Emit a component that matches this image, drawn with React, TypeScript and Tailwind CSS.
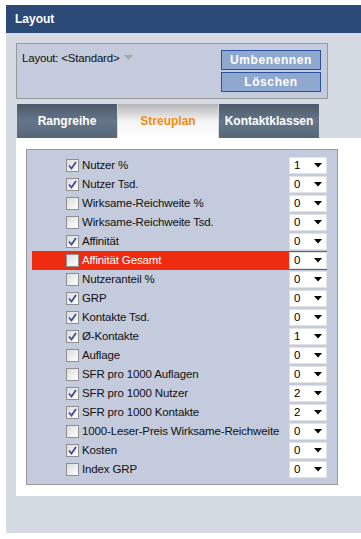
const rows: { label: string; checked: boolean; value: string; active?: boolean }[] = [
  { label: 'Nutzer %', checked: true, value: '1' },
  { label: 'Nutzer Tsd.', checked: true, value: '0' },
  { label: 'Wirksame-Reichweite %', checked: false, value: '0' },
  { label: 'Wirksame-Reichweite Tsd.', checked: false, value: '0' },
  { label: 'Affinität', checked: true, value: '0' },
  { label: 'Affinität Gesamt', checked: false, value: '0', active: true },
  { label: 'Nutzeranteil %', checked: false, value: '0' },
  { label: 'GRP', checked: true, value: '0' },
  { label: 'Kontakte Tsd.', checked: true, value: '0' },
  { label: 'Ø-Kontakte', checked: true, value: '1' },
  { label: 'Auflage', checked: false, value: '0' },
  { label: 'SFR pro 1000 Auflagen', checked: false, value: '0' },
  { label: 'SFR pro 1000 Nutzer', checked: true, value: '2' },
  { label: 'SFR pro 1000 Kontakte', checked: true, value: '2' },
  { label: '1000-Leser-Preis Wirksame-Reichweite', checked: false, value: '0' },
  { label: 'Kosten', checked: true, value: '0' },
  { label: 'Index GRP', checked: false, value: '0' },
]

const Checkbox = ({ checked }: { checked: boolean }) => (
  <span className="w-[13px] h-[13px] shrink-0 border border-[#8f8f8f] bg-gradient-to-br from-[#dcdcdc] to-white flex items-center justify-center">
    {checked && (
      <svg width="9" height="9" viewBox="0 0 9 9">
        <path d="M1 4.5 L3.5 7.5 L8 1" fill="none" stroke="#3d4f9a" strokeWidth="1.8" />
      </svg>
    )}
  </span>
)

const Select = ({ value }: { value: string }) => (
  <div className="w-[38px] h-[17px] shrink-0 bg-white border border-[#e2e2e2] flex items-center justify-between pl-[4px] pr-[4px] text-black">
    <span>{value}</span>
    <svg width="8" height="5" viewBox="0 0 8 5">
      <path d="M0 0 H8 L4 4.5 Z" fill="#000" />
    </svg>
  </div>
)

const Tab = ({ label, active }: { label: string; active?: boolean }) => (
  <div
    className={`w-[100px] h-[34px] flex items-center justify-center font-bold ${
      active
        ? 'bg-gradient-to-b from-[#b4b4b4] via-[#f4f4f4] to-white text-[#f28a0e]'
        : 'bg-gradient-to-b from-[#4a5a6a] via-[#66768a] to-[#56677a] text-white'
    }`}
  >
    {label}
  </div>
)

export default function App() {
  return (
    <div
      className="bg-white w-[361px] h-[539px] pt-[5px] pl-[6px] text-[12px] leading-none"
      style={{ fontFamily: '"Liberation Sans", Arial, sans-serif' }}
    >
      <div className="h-[28px] bg-[#2b4a78] text-white font-bold text-[12px] flex items-center pl-[9px]">
        Layout
      </div>
      <div className="bg-[#d4dbe3] pt-[10px] pl-[10px] h-[500px]">
        <div className="w-[312px] h-[56px] border border-[#999999] bg-[#c3cbdd] flex justify-between pl-[5px] pr-[6px] pt-[6px]">
          <div className="flex items-start gap-[3px] text-[#111] text-[11.5px] tracking-[-0.2px] pt-[3px]">
            <span>Layout:</span>
            <span>&lt;Standard&gt;</span>
            <svg width="9" height="6" viewBox="0 0 9 6" className="mt-[2px] ml-[2px]">
              <path d="M0 0 H9 L4.5 5 Z" fill="#a8a8a8" />
            </svg>
          </div>
          <div className="flex flex-col gap-[2px]">
            {['Umbenennen', 'Löschen'].map(b => (
              <div
                key={b}
                className="w-[100px] h-[20px] border border-[#2a50a0] bg-[#8fa8d0] text-white font-bold tracking-[0.6px] flex items-center justify-center"
              >
                {b}
              </div>
            ))}
          </div>
        </div>
        <div className="flex gap-[1px] mt-[5px] ml-[1px]">
          <Tab label="Rangreihe" />
          <Tab label="Streuplan" active />
          <Tab label="Kontaktklassen" />
        </div>
        <div className="bg-white pt-[11px] pb-[11px] pl-[10px]">
          <div className="w-[312px] border border-[#999999] bg-[#c3cbdd] pt-[6px] pb-[5px] pl-[5px] text-[11.5px] tracking-[-0.15px]">
            {rows.map(r => (
              <div
                key={r.label}
                className={`w-[295px] h-[19px] flex items-center pl-[34px] ${
                  r.active ? 'bg-[#f02c10] text-white' : 'text-[#111]'
                }`}
              >
                <Checkbox checked={r.checked} />
                <span className="ml-[3px] flex-1 whitespace-nowrap">{r.label}</span>
                <Select value={r.value} />
              </div>
            ))}
          </div>
        </div>
      </div>
    </div>
  )
}
